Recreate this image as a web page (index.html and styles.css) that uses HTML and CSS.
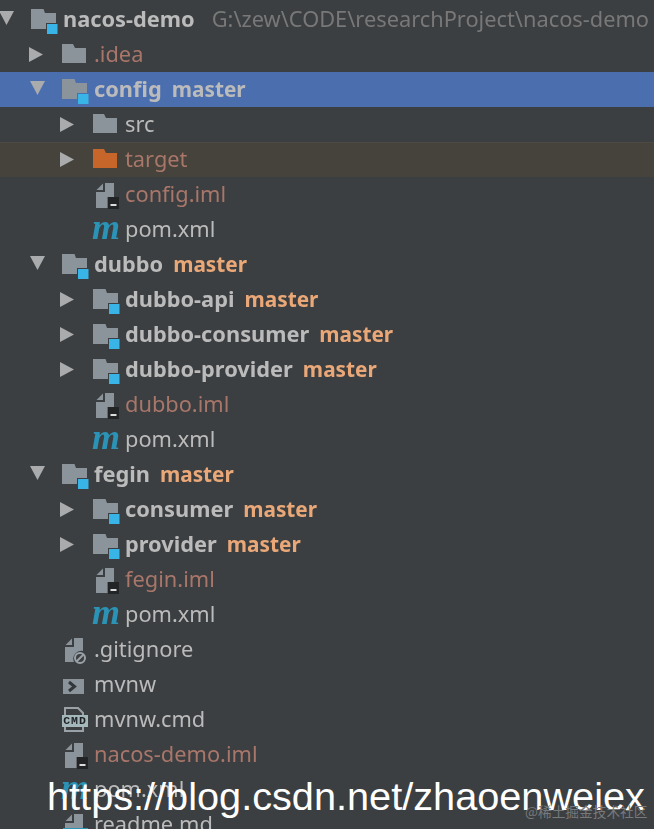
FILE: index.html
```html
<!DOCTYPE html>
<html lang="en">
<head>
<meta charset="utf-8">
<title>Project tree</title>
<link rel="stylesheet" href="styles.css">
</head>
<body>
<svg class="defs" width="0" height="0" aria-hidden="true">
  <defs>
    <symbol id="right" viewBox="0 0 14 15"><path d="M0 0L14 7.500L0 15Z" fill="#a9abac"/></symbol>
    <symbol id="down" viewBox="0 0 15 14"><path d="M0 0H15L7.500 14Z" fill="#a9abac"/></symbol>
    <symbol id="folder" viewBox="0 0 24 19"><path d="M0 0H11L13 4H24V19H0Z" fill="#8b949b"/></symbol>
    <symbol id="orange" viewBox="0 0 24 19"><path d="M0 0H11L13 4H24V19H0Z" fill="#c7662b"/></symbol>
    <symbol id="module" viewBox="0 0 27 25"><path d="M0 0H12.500L14 4H25V14H15V20H0Z" fill="#8b949b"/><rect x="16" y="15" width="10.500" height="10" fill="#38b4e6"/></symbol>
    <symbol id="iml" viewBox="0 0 23 26"><path d="M0.500 7L7 0.500V7Z" fill="#8b949b"/><path d="M9 0H18V14H11.500V25H0V9H9Z" fill="#8b949b"/><rect x="12" y="14" width="11" height="12" fill="#222426"/><rect x="14.500" y="21" width="6" height="2" fill="#dcdcdc"/></symbol>
    <symbol id="git" viewBox="0 0 23 26"><path d="M0.500 7L7 0.500V7Z" fill="#8b949b"/><path d="M9 0H18V13A8 8 0 0 0 9 24H0V9H9Z" fill="#8b949b"/><circle cx="15" cy="20" r="5" fill="none" stroke="#9aa2a8" stroke-width="2"/><path d="M11.500 23.500L18.500 16.500" stroke="#9aa2a8" stroke-width="2"/></symbol>
    <symbol id="shell" viewBox="0 0 21 15"><rect width="21" height="15" fill="#8b949b"/><path d="M6 3L11.500 7.500L6 12" fill="none" stroke="#33373a" stroke-width="3"/></symbol>
    <symbol id="doc" viewBox="0 0 19 25"><path d="M0.500 7L7 0.500V7Z" fill="#8b949b"/><path d="M9 0H18V25H0V9H9Z" fill="#8b949b"/></symbol>
    <symbol id="cmdfile" viewBox="0 0 20 25"><path d="M1 1H14L19 6V24H1Z" fill="none" stroke="#9aa2a8" stroke-width="2"/></symbol>
  </defs>
</svg>
<main class="tree">
  <div class="row l0"><svg class="arrow-down"><use href="#down"/></svg><svg class="ico-mod"><use href="#module"/></svg><b class="name">nacos-demo</b><span class="path">G:\zew\CODE\researchProject\nacos-demo master</span></div>
  <div class="row l1"><svg class="arrow-right"><use href="#right"/></svg><svg class="ico-folder"><use href="#folder"/></svg><span class="name ign">.idea</span></div>
  <div class="row l1 selected"><svg class="arrow-down"><use href="#down"/></svg><svg class="ico-mod"><use href="#module"/></svg><b class="name">config</b><b class="branch">master</b></div>
  <div class="row l2"><svg class="arrow-right"><use href="#right"/></svg><svg class="ico-folder"><use href="#folder"/></svg><span class="name">src</span></div>
  <div class="row l2 excluded"><svg class="arrow-right"><use href="#right"/></svg><svg class="ico-folder"><use href="#orange"/></svg><span class="name ign">target</span></div>
  <div class="row l2"><span class="arrow-none"></span><svg class="ico-file"><use href="#iml"/></svg><span class="name ign">config.iml</span></div>
  <div class="row l2"><span class="arrow-none"></span><span class="ico-mvn">m</span><span class="name">pom.xml</span></div>
  <div class="row l1"><svg class="arrow-down"><use href="#down"/></svg><svg class="ico-mod"><use href="#module"/></svg><b class="name">dubbo</b><b class="branch">master</b></div>
  <div class="row l2"><svg class="arrow-right"><use href="#right"/></svg><svg class="ico-mod"><use href="#module"/></svg><b class="name">dubbo-api</b><b class="branch">master</b></div>
  <div class="row l2"><svg class="arrow-right"><use href="#right"/></svg><svg class="ico-mod"><use href="#module"/></svg><b class="name">dubbo-consumer</b><b class="branch">master</b></div>
  <div class="row l2"><svg class="arrow-right"><use href="#right"/></svg><svg class="ico-mod"><use href="#module"/></svg><b class="name">dubbo-provider</b><b class="branch">master</b></div>
  <div class="row l2"><span class="arrow-none"></span><svg class="ico-file"><use href="#iml"/></svg><span class="name ign">dubbo.iml</span></div>
  <div class="row l2"><span class="arrow-none"></span><span class="ico-mvn">m</span><span class="name">pom.xml</span></div>
  <div class="row l1"><svg class="arrow-down"><use href="#down"/></svg><svg class="ico-mod"><use href="#module"/></svg><b class="name">fegin</b><b class="branch">master</b></div>
  <div class="row l2"><svg class="arrow-right"><use href="#right"/></svg><svg class="ico-mod"><use href="#module"/></svg><b class="name">consumer</b><b class="branch">master</b></div>
  <div class="row l2"><svg class="arrow-right"><use href="#right"/></svg><svg class="ico-mod"><use href="#module"/></svg><b class="name">provider</b><b class="branch">master</b></div>
  <div class="row l2"><span class="arrow-none"></span><svg class="ico-file"><use href="#iml"/></svg><span class="name ign">fegin.iml</span></div>
  <div class="row l2"><span class="arrow-none"></span><span class="ico-mvn">m</span><span class="name">pom.xml</span></div>
  <div class="row l1"><span class="arrow-none"></span><svg class="ico-file"><use href="#git"/></svg><span class="name">.gitignore</span></div>
  <div class="row l1"><span class="arrow-none"></span><svg class="ico-shell"><use href="#shell"/></svg><span class="name">mvnw</span></div>
  <div class="row l1"><span class="arrow-none"></span><span class="ico-cmd"><svg class="cmd-page"><use href="#cmdfile"/></svg><span class="cmd-tag">CMD</span></span><span class="name">mvnw.cmd</span></div>
  <div class="row l1"><span class="arrow-none"></span><svg class="ico-file"><use href="#iml"/></svg><span class="name ign">nacos-demo.iml</span></div>
  <div class="row l1"><span class="arrow-none"></span><span class="ico-mvn">m</span><span class="name">pom.xml</span></div>
  <div class="row l1"><span class="arrow-none"></span><span class="ico-md"><svg class="md-page"><use href="#doc"/></svg><span class="md-band"></span></span><span class="name">readme.md</span></div>
</main>
<div class="mark">https://blog.csdn.net/zhaoenweiex</div>
<div class="credit">@稀土掘金技术社区</div>
</body>
</html>
```

FILE: styles.css
```css
* { box-sizing: border-box; }
html, body {
  margin: 0;
  height: 829px;
  overflow: hidden;
  background: #3c3f41;
}
body {
  position: relative;
  width: 654px;
  font-family: "Noto Sans", "Open Sans", "Liberation Sans", sans-serif;
}
.defs { position: absolute; }
.tree {
  height: 829px;
  overflow: hidden;
  padding-top: 2px;
  font-size: 21.6px;
  color: #bbbbbb;
  filter: blur(0.5px);
}
.row {
  display: flex;
  align-items: center;
  height: 35px;
  white-space: nowrap;
}
.l0 { padding-left: 0; }
.l1 { padding-left: 31px; }
.l2 { padding-left: 62px; }
.selected { background: #4b6eaf; }
.excluded { background: #45433b; box-shadow: inset 0 1px 0 #4c4a42; }

.arrow-right { flex: none; width: 14px; height: 15px; margin: 0 18px 0 -2px; }
.arrow-down { flex: none; width: 15px; height: 14px; margin: 0 16px 3px -1px; }
.arrow-none { flex: none; width: 30px; }

.ico-mod { flex: none; width: 27px; height: 25px; margin: 4px 5px 0 1px; }
.ico-folder { flex: none; width: 24px; height: 19px; margin: 0 8px 2px 1px; }
.ico-file { flex: none; width: 23px; height: 26px; margin: 3px 6px 0 4px; }
.ico-shell { flex: none; width: 21px; height: 15px; margin: 4px 10px 0 2px; }

.name, .branch, .path { flex: none; margin-bottom: 2px; }
.name { font-size: 21.8px; }
.ign { color: #a9766a; }
.branch { margin-left: 10px; font-size: 20.8px; color: #eaa878; }
.selected .branch { color: #bbbbbb; }
.path { margin-left: 17px; font-size: 21.8px; color: #787878; }

.ico-mvn {
  flex: none;
  width: 33px;
  margin-bottom: 6px;
  font-family: "Liberation Serif", serif;
  font-style: italic;
  font-weight: 700;
  font-size: 36px;
  line-height: 24px;
  color: #2b93b6;
}
.ico-cmd { flex: none; position: relative; width: 33px; height: 26px; }
.cmd-page { position: absolute; left: 3px; top: 0; width: 20px; height: 25px; }
.cmd-tag {
  position: absolute;
  left: 1px;
  top: 8px;
  width: 26px;
  height: 12px;
  background: #a4b7bb;
  color: #1c2022;
  font: 700 11.500px/12px "Liberation Mono", monospace;
  letter-spacing: 1px;
  text-align: center;
}
.ico-md { flex: none; position: relative; width: 33px; height: 30px; }
.md-page { position: absolute; left: 4px; top: 4px; width: 19px; height: 25px; }
.md-band { position: absolute; left: 2px; top: 18px; width: 25px; height: 12px; background: #2b93b6; }

.mark {
  position: absolute;
  left: 47px;
  top: 772px;
  font: 39.700px/48px "Liberation Sans", sans-serif;
  color: #ffffff;
  white-space: nowrap;
}
.credit {
  position: absolute;
  left: 525px;
  top: 802px;
  font: 13.700px/18px "Noto Sans CJK SC", sans-serif;
  color: #77797b;
  white-space: nowrap;
}
```
